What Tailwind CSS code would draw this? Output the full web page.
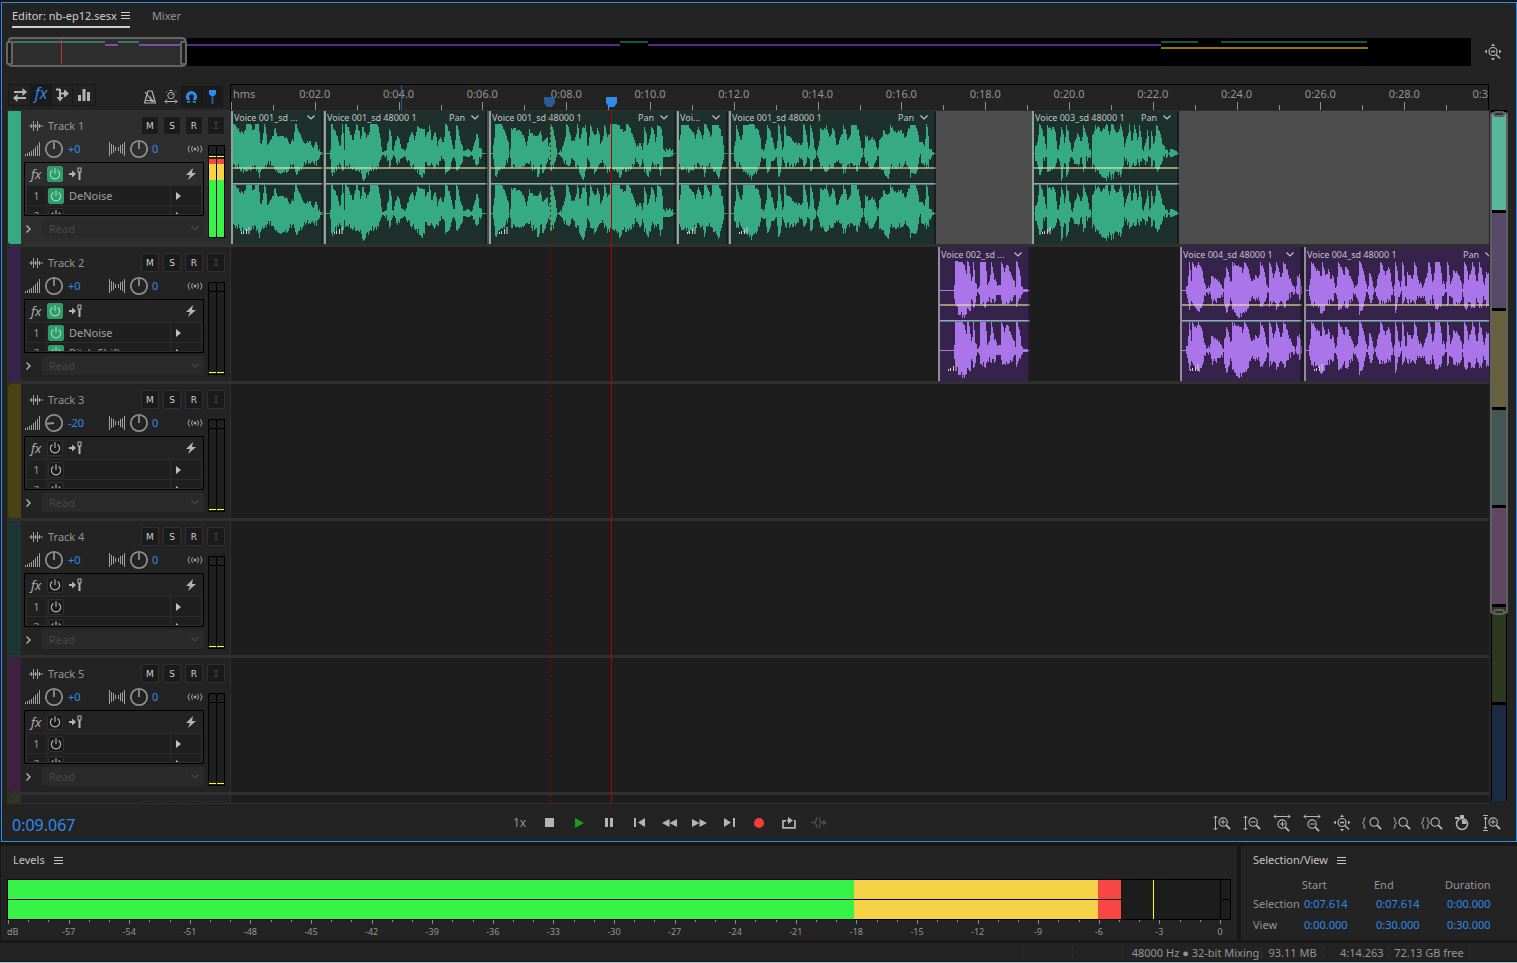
<!DOCTYPE html>
<html lang="en">
<head>
    <meta charset="UTF-8">
    <meta name="viewport" content="width=device-width, initial-scale=1.0">
    <title>Editor: nb-ep12.sesx</title>
    <script src="https://cdn.jsdelivr.net/npm/@tailwindcss/browser@4"></script>
</head>
<body class="flex h-screen flex-col overflow-hidden border-b border-[#b4c6c9] bg-[#171717] pt-[2px] font-['Noto_Sans','Open_Sans',sans-serif] text-[11px] leading-4 text-[#959595]">

    <!-- Icon sprite -->
    <svg class="hidden" aria-hidden="true">
        <symbol id="menu" viewBox="0 0 9 9"><path d="M0 1.5h9M0 4.5h9M0 7.5h9" stroke="currentColor" shape-rendering="crispEdges"/></symbol>
        <symbol id="power" viewBox="0 0 16 16"><path d="M5 3.900a5.300 5.300 0 1 0 6 0M8 1.500v6.500" fill="none" stroke="currentColor" stroke-width="1.300"/></symbol>
        <symbol id="wave" viewBox="0 0 14 10"><path d="M0 5h14M2.500 3v4M4.500 0v10M6.500 3v4M8.500 0v10M10.500 3v4" stroke="currentColor" fill="none"/></symbol>
        <symbol id="gain" viewBox="0 0 15 14"><path d="M.5 12v2M2.500 11v3M4.500 10v4M6.500 8.500v5.500M8.500 7v7M10.500 5v9M12.500 3v11M14.500 0v14" stroke="currentColor" shape-rendering="crispEdges"/></symbol>
        <symbol id="pan" viewBox="0 0 16 14"><path d="M.5 0v14M2.500 2v10M4.500 3v8M6.500 5v4M9.500 5v4M11.500 3v8M13.500 2v10M15.500 0v14" stroke="currentColor" shape-rendering="crispEdges"/></symbol>
        <symbol id="knob" viewBox="0 0 20 20"><circle cx="10" cy="10" r="8.200" fill="none" stroke="currentColor" stroke-width="1.800"/><path d="M10 10V3" stroke="currentColor" stroke-width="1.800"/></symbol>
        <symbol id="monitor" viewBox="0 0 16 8"><circle cx="8" cy="4" r="1.500" fill="currentColor"/><path d="M5.500 1.200q-2 2.800 0 5.600M10.500 1.200q2 2.800 0 5.600M2.500.5q-3 3.500 0 7M13.500.5q3 3.500 0 7" fill="none" stroke="currentColor"/></symbol>
        <symbol id="prefader" viewBox="0 0 13 14"><path d="M0 7h4" stroke="currentColor" stroke-width="2"/><path d="M3 3.500l4 3.500-4 3.500z" fill="currentColor"/><path d="M10.500 5v8" stroke="currentColor" stroke-width="2"/><rect x="9" y="1" width="3" height="4" fill="none" stroke="currentColor"/></symbol>
        <symbol id="bolt" viewBox="0 0 10 12"><path d="M7 0L0 7h4L2 12l8-7H6z" fill="currentColor"/></symbol>
        <symbol id="chevron" viewBox="0 0 8 5"><path d="M.5.5L4 4 7.500.5" fill="none" stroke="currentColor" stroke-width="1.200"/></symbol>
        <symbol id="lens" viewBox="0 0 14 14"><circle cx="5.500" cy="5.500" r="4.500" fill="none" stroke="currentColor" stroke-width="1.200"/><path d="M8.800 8.800L13 13" stroke="currentColor" stroke-width="2"/></symbol>
        <symbol id="zoom-full" viewBox="0 0 18 18"><circle cx="9" cy="8.500" r="4" fill="none" stroke="currentColor" stroke-width="1.200"/><path d="M7 8.500h4M12 11.500l4 4" stroke="currentColor" stroke-width="1.500"/><path d="M7 3l2-2.500L11 3zM7 15l2 2.500 2-2.500zM3 6.500L.5 8.500 3 10.500zM15 6.500l2.500 2-2.500 2z" fill="currentColor"/></symbol>
    </svg>

    <!-- Editor panel -->
    <main class="ml-px flex min-h-0 flex-1 flex-col border border-[#2d8ceb] bg-[#232323]">
        <nav class="flex h-[28px] items-start pl-[10px]">
            <a href="#editor" class="flex h-[25px] items-center gap-[4px] border-b-2 border-[#d0d0d0] pt-[2px] text-[#d0d0d0]">
                Editor: nb-ep12.sesx
                <svg class="size-[9px]"><use href="#menu"/></svg>
            </a>
            <a href="#mixer" class="ml-[22px] flex h-[24px] items-center pt-[2px]">Mixer</a>
        </nav>

        <!-- Session overview -->
        <div class="flex h-[42px] items-start pt-[7px] pl-[6px]">
            <div class="relative h-[28px] flex-1 bg-black">
                <svg class="h-full w-full" viewBox="0 0 1463 28" preserveAspectRatio="none" shape-rendering="crispEdges">
                    <rect width="179" height="28" fill="#2d2d2d"/>
                    <path d="M4 4h93M110 4h21" stroke="#3a7763" stroke-width="2"/>
                    <path d="M97 7h13M131 7h48" stroke="#794fa8" stroke-width="2"/>
                    <path d="M612 4h28M1153 4h37M1213 4h146" stroke="#145740" stroke-width="2"/>
                    <path d="M179 7h433M640 7h513" stroke="#572990" stroke-width="2"/>
                    <path d="M1153 10h207" stroke="#937800" stroke-width="2"/>
                    <path d="M53.500 1v25" stroke="#c9302c"/>
                </svg>
                <div class="absolute -top-px left-0 h-[30px] w-[12.2%] rounded-[4px] border-2 border-[#656565]">
                    <span class="absolute top-[2px] -left-[4px] h-[24px] w-[7px] rounded-[2px] border-2 border-[#656565] bg-[#1c1c1c]"></span>
                    <span class="absolute top-[2px] -right-[3px] h-[24px] w-[7px] rounded-[2px] border-2 border-[#656565] bg-[#1c1c1c]"></span>
                </div>
            </div>
            <button aria-label="Zoom out full" class="mt-[5px] mr-[14px] ml-[13px] text-[#b4b4b4]"><svg class="size-[18px]"><use href="#zoom-full"/></svg></button>
        </div>

        <!-- Tools and ruler -->
        <div class="mt-[11px] flex h-[26px] shrink-0 pl-[6px]">
            <div class="flex w-[222px] items-start text-[#b4b4b4]">
                <div class="flex h-[22px] divide-x divide-[#181818] rounded-[2px] border border-[#181818]">
                    <button aria-label="Inputs/Outputs" class="flex w-[22px] items-center justify-center"><svg class="h-[14px] w-[16px]" viewBox="0 0 16 14"><path d="M2 4h10M4 10h10" stroke="currentColor" stroke-width="2"/><path d="M10.500 0l4.500 4-4.500 4zM5.500 6L1 10l4.500 4z" fill="currentColor"/></svg></button>
                    <button aria-label="Effects" class="w-[21px] bg-[#1b1b1b] pb-[4px] font-['Open_Sans',sans-serif] text-[16px] leading-4 text-[#2d8ceb] italic">fx</button>
                    <button aria-label="Sends" class="flex w-[21px] items-center justify-center"><svg class="h-[14px] w-[14px]" viewBox="0 0 14 14"><path d="M5 1v9M1 1.500h4M5 5.500h5M10 2.500v6" stroke="currentColor" stroke-width="2" fill="none"/><path d="M1.500 9h7L5 13.500zM9.500 1.500L14 5.500l-4.500 4z" fill="currentColor"/></svg></button>
                    <button aria-label="EQ" class="flex w-[22px] items-center justify-center"><svg class="h-[12px] w-[12px]" viewBox="0 0 12 12"><path d="M0 6h3v6H0zM4.500 0h3v12h-3zM9 3h3v9H9z" fill="currentColor"/></svg></button>
                </div>
                <div class="mt-[2px] ml-auto flex h-[21px] items-center">
                    <button aria-label="Metronome" class="w-[21px]"><svg class="mx-auto h-[14px] w-[14px]" viewBox="0 0 14 14"><path d="M5 1h4l3.500 12h-11zM3 10.500h8M2 2l8 10" fill="none" stroke="currentColor" stroke-width="1.200"/><path d="M7 5l4 7H7z" fill="currentColor" fill-opacity=".6"/></svg></button>
                    <button aria-label="Time stretch" class="w-[21px]"><svg class="mx-auto h-[14px] w-[14px]" viewBox="0 0 14 14"><circle cx="7" cy="5.500" r="3.200" fill="none" stroke="currentColor"/><path d="M7 5.500l2-2M5.500.5h3M3 1.500l-1 1M11 1.500l1 1M1 11.500h12M3 9.500l-2 2 2 2M11 9.500l2 2-2 2" fill="none" stroke="currentColor"/></svg></button>
                    <button aria-label="Snap" class="h-full w-[21px] border border-[#181818] bg-[#1b1b1b] text-[#2d8ceb]"><svg class="mx-auto h-[13px] w-[13px]" viewBox="0 0 13 13"><path d="M4 12.500l-1-4a4 4 0 1 1 7 0l-1 4" fill="none" stroke="currentColor" stroke-width="3.200"/><path d="M1 10.500h5M7 10.500h5" stroke="#1b1b1b"/></svg></button>
                    <button aria-label="Markers" class="mr-[7px] h-full w-[21px] border border-[#181818] bg-[#1b1b1b] text-[#2d8ceb]"><svg class="mx-auto h-[14px] w-[9px]" viewBox="0 0 9 14"><path d="M1 0h7v4L6 6H3L1 4z" fill="currentColor"/><path d="M4.500 6v8" stroke="#285d94" stroke-width="2"/></svg></button>
                </div>
            </div>
            <div class="relative mr-[27px] flex-1 overflow-hidden border-x border-t border-black">
                <span class="absolute top-[1px] left-[2px]">hms</span>
                <div id="ruler"></div>
                <span class="absolute top-0 left-[13.5%] h-full w-px bg-[#285d94]"></span>
                <svg class="absolute top-[12px] left-[25.4%] -ml-[6px] h-[11px] w-[11px]" viewBox="0 0 11 11"><path d="M0 0h11v6L8 10H3L0 6z" fill="#285d94"/></svg>
                <svg class="absolute top-[12px] left-[30.2%] -ml-[5px] h-[11px] w-[11px]" viewBox="0 0 11 11"><path d="M0 0h11v6L8 10H3L0 6z" fill="#2d8ceb"/></svg>
            </div>
        </div>

        <!-- Tracks -->
        <div class="ml-[5px] flex min-h-0 flex-1">
            <div class="flex min-w-0 flex-1 overflow-hidden border-y border-l border-[#303030]">
                <div id="headers" class="-mt-px w-[223px] shrink-0 border-r border-[#303030]"></div>
                <div class="relative -mt-px min-w-0 flex-1">
                    <div id="lanes"></div>
                    <span class="absolute top-0 left-[25.36%] h-full w-px bg-[repeating-linear-gradient(#a80000_0_2px,transparent_2px_5px)]"></span>
                    <span class="absolute top-0 left-[30.2%] h-full w-px bg-[#b40000]"></span>
                </div>
            </div>
            <div class="relative mr-[8px] w-[19px] shrink-0 pb-[3px]">
                <div class="ml-[2px] flex h-full w-[16px] flex-col gap-[3px] border-x border-black bg-black pt-[4px]">
                    <span class="flex-1 bg-[#56b898]"></span>
                    <span class="flex-1 bg-[#594968]"></span>
                    <span class="flex-1 bg-[#68613f]"></span>
                    <span class="flex-1 bg-[#425654]"></span>
                    <span class="flex-1 bg-[#5f4762]"></span>
                    <span class="flex-1 bg-[#2b381e]"></span>
                    <span class="flex-1 bg-[#192a41]"></span>
                </div>
                <div class="absolute top-[2px] left-px h-[72.4%] w-[18px] rounded-[3px] border-2 border-[#606060]">
                    <span class="absolute -top-[3px] left-[1px] h-[6px] w-[12px] rounded-[3px] border-2 border-[#606060] bg-[#303030]"></span>
                    <span class="absolute -bottom-[3px] left-[1px] h-[6px] w-[12px] rounded-[3px] border-2 border-[#606060] bg-[#303030]"></span>
                </div>
            </div>
        </div>

        <!-- Transport -->
        <div class="grid h-[37px] shrink-0 grid-cols-[505px_1fr_auto] items-center text-[#b4b4b4]">
            <output class="pt-[4px] pl-[10px] text-[16px] text-[#2d8ceb]">0:09.067</output>
            <div class="flex items-center">
                <span class="w-[27px] pl-[6px] text-[12px] text-[#959595]">1x</span>
                <button aria-label="Stop" class="flex w-[30px] justify-center"><svg class="size-[9px]" viewBox="0 0 9 9"><path d="M0 0h9v9H0z" fill="currentColor"/></svg></button>
                <button aria-label="Play" class="flex w-[30px] justify-center"><svg class="h-[10px] w-[9px]" viewBox="0 0 9 10"><path d="M0 0l9 5-9 5z" fill="#17a017"/></svg></button>
                <button aria-label="Pause" class="flex w-[30px] justify-center"><svg class="h-[9px] w-[8px]" viewBox="0 0 8 9"><path d="M0 0h3v9H0zM5 0h3v9H5z" fill="currentColor"/></svg></button>
                <button aria-label="Previous" class="flex w-[30px] justify-center"><svg class="h-[9px] w-[11px]" viewBox="0 0 11 9"><path d="M0 0h2v9H0zM11 0v9L4 4.500z" fill="currentColor"/></svg></button>
                <button aria-label="Rewind" class="flex w-[30px] justify-center"><svg class="h-[8px] w-[15px]" viewBox="0 0 15 8"><path d="M7.500 0v8L0 4zM15 0v8L7.500 4z" fill="currentColor"/></svg></button>
                <button aria-label="Fast forward" class="flex w-[30px] justify-center"><svg class="h-[8px] w-[15px]" viewBox="0 0 15 8"><path d="M0 0v8l7.500-4zM7.500 0v8L15 4z" fill="currentColor"/></svg></button>
                <button aria-label="Next" class="flex w-[30px] justify-center"><svg class="h-[9px] w-[11px]" viewBox="0 0 11 9"><path d="M9 0h2v9H9zM0 0v9l7-4.500z" fill="currentColor"/></svg></button>
                <button aria-label="Record" class="flex w-[30px] justify-center"><svg class="size-[10px]" viewBox="0 0 10 10"><circle cx="5" cy="5" r="5" fill="#f83c3c"/></svg></button>
                <button aria-label="Loop" class="flex w-[30px] justify-center"><svg class="h-[12px] w-[14px]" viewBox="0 0 14 12"><path d="M4 3.800H1v7h12v-7h-1M5 3.500h3" fill="none" stroke="currentColor" stroke-width="1.700"/><path d="M6 0l5 3.500L6 7z" fill="currentColor"/></svg></button>
                <button aria-label="Skip selection" class="flex w-[30px] justify-center text-[#4a4a4a]"><svg class="h-[11px] w-[16px]" viewBox="0 0 16 11"><path d="M0 5.500h3M5.500 0v3l-2 2.500 2 2.500v3M8.500 0v3l2 2.500-2 2.500v3M9 5.500h4" fill="none" stroke="currentColor" stroke-width="1.400"/><path d="M12 2.500l4 3-4 3z" fill="currentColor"/></svg></button>
            </div>
            <div class="mr-[9px] flex items-center">
                <button aria-label="Zoom in vertically" class="flex w-[30px] justify-center"><svg class="h-[16px] w-[18px]" viewBox="0 0 18 16"><path d="M2.500 1v14M.5 3l2-2 2 2M.5 13l2 2 2-2M7.500 7h5M10 4.500v5" fill="none" stroke="currentColor"/><use href="#lens" x="5" y="2" width="13" height="13"/></svg></button>
                <button aria-label="Zoom out vertically" class="flex w-[30px] justify-center"><svg class="h-[16px] w-[18px]" viewBox="0 0 18 16"><path d="M2.500 1v14M.5 3l2-2 2 2M.5 13l2 2 2-2M7.500 7h5" fill="none" stroke="currentColor"/><use href="#lens" x="5" y="2" width="13" height="13"/></svg></button>
                <button aria-label="Zoom in horizontally" class="flex w-[30px] justify-center"><svg class="h-[18px] w-[18px]" viewBox="0 0 18 18"><path d="M1 2.500h16M3 .5l-2 2 2 2M15 .5l2 2-2 2M7 10h5M9.500 7.500v5" fill="none" stroke="currentColor"/><use href="#lens" x="4" y="5" width="13" height="13"/></svg></button>
                <button aria-label="Zoom out horizontally" class="flex w-[30px] justify-center"><svg class="h-[18px] w-[18px]" viewBox="0 0 18 18"><path d="M1 2.500h16M3 .5l-2 2 2 2M15 .5l2 2-2 2M7 10h5" fill="none" stroke="currentColor"/><use href="#lens" x="4" y="5" width="13" height="13"/></svg></button>
                <button aria-label="Zoom full" class="flex w-[30px] justify-center"><svg class="size-[18px]"><use href="#zoom-full"/></svg></button>
                <button aria-label="Zoom to in point" class="flex w-[30px] justify-center pt-px"><svg class="h-[14px] w-[20px]" viewBox="0 0 20 14"><path d="M3.500 1.500q-1.500 0-1.500 2v2L.5 7 2 8.500v2q0 2 1.500 2" fill="none" stroke="currentColor"/><use href="#lens" x="7" y="1" width="13" height="13"/></svg></button>
                <button aria-label="Zoom to out point" class="flex w-[30px] justify-center pt-px"><svg class="h-[14px] w-[18px]" viewBox="0 0 18 14"><path d="M.5 1.500q1.500 0 1.500 2v2L3.500 7 2 8.500v2q0 2-1.500 2" fill="none" stroke="currentColor"/><use href="#lens" x="5" y="1" width="13" height="13"/></svg></button>
                <button aria-label="Zoom to selection" class="flex w-[30px] justify-center pt-px"><svg class="h-[14px] w-[22px]" viewBox="0 0 22 14"><path d="M3.500 1.500q-1.500 0-1.500 2v2L.5 7 2 8.500v2q0 2 1.500 2M5.500 1.500q1.500 0 1.500 2v2L8.500 7 7 8.500v2q0 2-1.500 2" fill="none" stroke="currentColor"/><use href="#lens" x="9" y="1" width="13" height="13"/></svg></button>
                <button aria-label="Timed record" class="flex w-[30px] justify-center"><svg class="h-[16px] w-[14px]" viewBox="0 0 14 16"><circle cx="7" cy="9" r="5.500" fill="none" stroke="currentColor" stroke-width="1.500"/><path d="M5 0h4v3H5zM0 2h4v2H0zM7 4.500A4.500 4.500 0 0 1 11.500 9L7 9z" fill="currentColor"/></svg></button>
                <button aria-label="Zoom selected track" class="flex w-[30px] justify-center"><svg class="h-[16px] w-[18px]" viewBox="0 0 18 16"><path d="M0 .5h5M0 15.500h5M2.500 2v12M1 4l1.500-2L4 4M1 12l1.500 2L4 12M7.500 7h5M10 4.500v5" fill="none" stroke="currentColor"/><use href="#lens" x="5" y="2" width="13" height="13"/></svg></button>
            </div>
        </div>
    </main>

    <!-- Bottom panels -->
    <div class="mt-[4px] flex h-[94px] shrink-0 gap-[4px]">
        <section class="ml-px min-w-0 flex-1 bg-[#232323] px-[6px] pt-[6px]">
            <h2 class="flex items-center gap-[9px] pl-[6px] text-[#c4c4c4]">Levels <svg class="size-[9px]"><use href="#menu"/></svg></h2>
            <div class="mt-[11px] flex h-[41px] border border-black bg-[#1c1c1c]">
                <div class="relative flex-1">
                    <div class="flex h-full">
                        <span class="w-[69.8%] bg-[#37f247]"></span>
                        <span class="w-[20.1%] bg-[#f6d247]"></span>
                        <span class="w-[1.9%] bg-[#f74644]"></span>
                    </div>
                    <span class="absolute top-0 left-[94.5%] h-full w-px bg-[#ffff00]"></span>
                    <span class="absolute top-[19px] left-0 h-px w-[91.8%] bg-black"></span>
                </div>
                <div class="flex w-[10px] flex-col border-l border-black"><span class="h-[20px] border-b border-black"></span></div>
            </div>
            <div id="scale" class="relative mr-[11px] ml-px text-[9px]"></div>
        </section>

        <section class="w-[276px] bg-[#232323] pt-[6px] pl-[12px]">
            <h2 class="flex items-center gap-[9px] text-[#c4c4c4]">Selection/View <svg class="size-[9px]"><use href="#menu"/></svg></h2>
            <table class="mt-[7px] w-[249px] table-fixed text-left">
                <thead>
                    <tr class="h-[20px]"><td class="w-[49px]"></td><th scope="col" class="w-[72px] font-normal">Start</th><th scope="col" class="w-[71px] font-normal">End</th><th scope="col" class="font-normal">Duration</th></tr>
                </thead>
                <tbody class="text-[#2d8ceb]">
                    <tr class="h-[18px]"><th scope="row" class="font-normal text-[#959595]">Selection</th><td class="pl-[2px]">0:07.614</td><td class="pl-[2px]">0:07.614</td><td class="pl-[2px]">0:00.000</td></tr>
                    <tr class="h-[23px]"><th scope="row" class="font-normal text-[#959595]">View</th><td class="pl-[2px]">0:00.000</td><td class="pl-[2px]">0:30.000</td><td class="pl-[2px]">0:30.000</td></tr>
                </tbody>
            </table>
        </section>
    </div>

    <footer class="mt-[3px] mb-px flex h-[18px] shrink-0 items-center justify-end bg-[#232323] pr-[47px] *:h-[12px] *:border-l *:border-[#303030] *:leading-[14px] *:whitespace-nowrap">
        <span class="w-[50px]"></span>
        <span class="w-[50px]"></span>
        <span class="w-[139px] pl-[7px] text-center">48000 Hz ● 32-bit Mixing</span>
        <span class="w-[62px] text-center">93.11 MB</span>
        <span class="w-[65px] pl-[16px]">4:14.263</span>
        <span class="w-[81px] text-center">72.13 GB free</span>
        <span></span>
    </footer>

    <script>
        const VIEW = 1258; // timeline units shown in the lanes, 30 seconds

        const tracks = [
            { name: 'Track 1', strip: 'bg-[#36aa83]', vol: '+0', fx: ['DeNoise', ''], live: true },
            { name: 'Track 2', strip: 'bg-[#35234b]', vol: '+0', fx: ['DeNoise', 'Pitch Shifter'] },
            { name: 'Track 3', strip: 'bg-[#494213]', vol: '-20', fx: ['', ''] },
            { name: 'Track 4', strip: 'bg-[#1b3634]', vol: '+0', fx: ['', ''] },
            { name: 'Track 5', strip: 'bg-[#3f203f]', vol: '+0', fx: ['', ''] },
            { name: '', strip: 'bg-[#2b381e]', partial: true },
        ];

        // env: "x up down" breakpoints of the peak envelope
        const clips = [
            { lane: 0, x: 0, w: 92, name: 'Voice 001_sd ...', env: '2 29 14,9 22 18,13 22 19,15 29 18,19 29 18,21 25 16,24 29 17,27 29 25,29 12 20,33 29 14,36 12 12,41 17 13,43 27 17,46 18 20,54 17 19,58 12 15,61 14 14,64 29 22,68 22 18,71 15 14,74 12 11,78 13 11,81 8 11,84 15 13,87 5 7,89 1 1' },
            { lane: 0, x: 93, w: 163, name: 'Voice 001_sd 48000 1', pan: 1, env: '6 5 5,7 29 22,15 10 10,18 29 18,20 7 12,21 29 14,28 16 17,32 29 17,36 17 18,38 27 27,42 18 22,46 29 18,52 29 16,58 1 1,63 10 10,65 27 14,68 5 5,71 13 9,73 20 11,77 5 4,80 2 2,83 13 10,87 24 14,90 16 15,93 27 20,98 27 25,101 20 14,105 28 12,107 15 12,110 23 15,113 10 15,115 18 8,118 12 6,121 29 20,129 4 3,132 28 17,136 14 15,139 2 2,143 4 3,147 1 1,149 9 6,152 22 16,155 7 6,158 0 0' },
            { lane: 0, x: 258, w: 187, name: 'Voice 001_sd 48000 1', pan: 1, env: '4 10 10,6 29 23,11 29 16,18 15 10,20 0 0,22 27 14,28 25 15,37 10 10,40 25 10,42 21 18,47 18 14,48 20 27,51 22 12,53 13 20,57 19 10,59 8 6,61 29 18,68 0 0,75 15 10,77 29 14,82 13 10,86 18 14,88 29 14,90 15 20,93 27 27,96 28 18,98 8 5,101 28 14,105 18 20,108 27 14,111 10 10,115 28 14,118 18 20,121 29 16,130 28 24,134 22 18,137 29 18,147 8 8,150 13 14,153 6 8,155 27 18,158 12 24,162 27 14,166 15 14,168 28 14,171 27 24,174 4 3,179 6 3,183 4 2,184 0 0' },
            { lane: 0, x: 446, w: 51, name: 'Voi...', env: '2 15 14,4 28 16,11 28 20,18 18 14,20 27 14,25 15 14,27 29 24,29 28 14,33 18 14,35 28 18,41 28 25,44 20 15,46 10 8,47 0 0' },
            { lane: 0, x: 498, w: 207, name: 'Voice 001_sd 48000 1', pan: 1, env: '5 10 8,7 28 14,11 15 14,14 28 20,22 29 26,29 24 15,32 4 3,35 8 8,38 28 20,42 17 8,46 3 4,49 29 24,53 3 3,55 28 14,57 20 14,62 15 14,67 12 11,72 8 4,74 29 14,79 4 4,81 28 18,85 6 5,87 0 0,89 10 8,91 25 14,97 28 20,100 17 14,103 27 14,107 10 10,111 18 10,114 28 20,118 15 15,122 28 10,127 28 20,132 8 4,134 0 0,136 20 10,139 16 15,144 16 15,148 3 2,150 15 15,154 24 20,158 20 27,161 28 14,166 23 15,171 24 14,175 18 10,179 27 14,181 28 24,186 28 20,190 12 3,192 13 10,195 10 14,197 29 18,200 6 7,203 1 1,205 0 0' },
            { lane: 0, x: 801, w: 147, name: 'Voice 003_sd 48000 1', pan: 1, env: '3 8 8,7 29 25,11 20 8,14 4 3,15 28 18,22 25 14,25 5 4,29 27 27,32 12 10,34 28 27,37 15 8,39 3 3,42 14 10,45 23 14,48 12 6,51 28 18,54 20 8,57 5 5,59 0 0,60 20 14,63 28 18,69 25 24,74 29 27,77 20 20,79 29 26,84 23 20,88 29 24,92 8 6,93 14 10,97 29 16,99 15 14,102 28 14,105 15 10,107 28 14,110 4 4,113 14 12,115 23 8,117 3 3,119 24 14,121 12 10,124 28 20,128 20 12,130 10 8,134 4 4,136 0 0,138 4 3,143 2 1,146 0 0' },
            { lane: 1, x: 707, w: 92, name: 'Voice 002_sd ...', env: '16 6 8,17 29 14,20 28 24,24 28 28,28 20 24,29 29 18,32 20 24,33 10 10,35 28 18,37 10 12,39 1 1,41 4 4,42 28 14,47 28 18,49 8 12,51 12 12,53 28 12,56 12 12,59 8 4,62 5 4,63 28 14,66 20 14,68 27 14,71 21 12,75 12 10,77 5 8,78 29 17,81 20 12,83 4 4,85 1 1,91 0 0' },
            { lane: 1, x: 949, w: 122, name: 'Voice 004_sd 48000 1', env: '6 5 5,9 28 22,11 10 14,12 28 14,15 24 18,18 28 22,24 10 8,26 1 1,28 4 4,31 17 14,36 12 12,40 8 10,43 1 1,44 14 15,46 24 22,50 8 8,52 28 22,57 27 27,60 25 28,62 20 22,64 28 22,71 10 8,75 16 10,78 13 8,80 28 18,86 8 8,88 2 2,89 28 16,93 15 10,96 28 20,100 14 10,103 28 18,109 14 8,113 4 4,115 0 0,117 14 8,119 17 10,121 4 3' },
            { lane: 1, x: 1073, w: 197, name: 'Voice 004_sd 48000 1', pan: 1, env: '5 6 8,7 28 16,12 22 17,17 16 25,18 28 26,21 16 14,24 22 14,26 12 14,28 18 12,31 2 2,34 28 20,39 16 14,41 26 20,45 16 14,50 6 4,52 4 6,55 29 24,61 10 6,63 1 1,65 18 14,70 0 0,73 14 12,76 28 14,81 18 12,84 24 16,87 8 6,89 0 0,91 28 22,94 12 8,96 3 3,98 28 14,101 5 6,103 18 14,108 14 10,110 28 14,114 10 8,118 5 6,121 12 14,124 28 16,128 12 10,131 28 20,135 28 18,138 10 8,141 1 1,143 28 15,146 8 6,149 20 16,156 14 12,158 1 1,160 28 22,164 14 14,168 28 20,172 10 10,175 28 20,179 8 8,182 20 16,190 14 14' },
        ];

        const icon = (id, cls) => `<svg class="${cls}"><use href="#${id}"/></svg>`;

        const power = on => `<button aria-label="Power" class="flex size-[16px] items-center justify-center rounded-[2px] border ${on ? 'border-[#2f9c6b] bg-[#2f9c6b] text-[#9bdcbc]' : 'border-[#303030] bg-[#1b1b1b] text-[#b4b4b4]'}">${icon('power', 'size-[14px] shrink-0')}</button>`;

        const slot = (name, i) => `
            <div class="flex h-[20px] items-center border-b border-[#2c2c2c]">
                <span class="w-[19px] text-center">${i + 1}</span>
                <span class="flex h-full w-[23px] items-center border-l border-[#2c2c2c] pl-px">${power(name)}</span>
                <span class="w-[101px] text-[#a0a0a0]">${name}</span>
                <button aria-label="Effect menu" class="flex h-full flex-1 items-center border-l border-[#2c2c2c] pl-[5px] text-[#c0c0c0]"><svg class="h-[8px] w-[5px]" viewBox="0 0 5 8"><path d="M0 0l5 4-5 4z" fill="currentColor"/></svg></button>
            </div>`;

        const controls = t => `
            <div class="flex gap-[4px]">
                <div class="w-[180px]">
                    <div class="flex h-[27px] items-center pt-px text-[#a0a0a0]">
                        ${icon('gain', 'ml-px h-[14px] w-[15px]')}
                        <svg class="ml-[4px] size-[20px] text-[#8f8f8f] ${t.vol === '-20' ? '-rotate-96' : ''}"><use href="#knob"/></svg>
                        <span class="ml-[4px] w-[41px] text-[#2d8ceb]">${t.vol}</span>
                        ${icon('pan', 'h-[14px] w-[16px]')}
                        ${icon('knob', 'ml-[4px] size-[20px] text-[#8f8f8f]')}
                        <span class="ml-[3px] text-[#2d8ceb]">0</span>
                        ${icon('monitor', 'mr-px ml-auto h-[8px] w-[16px]')}
                    </div>
                    <div class="h-[54px] overflow-hidden border border-black">
                        <div class="flex h-[22px] items-center pr-[7px] pl-[6px] text-[#b4b4b4]">
                            <span class="w-[16px] font-['Open_Sans',sans-serif] text-[13px] italic">fx</span>
                            ${power(t.fx[0])}
                            ${icon('prefader', 'ml-[6px] h-[14px] w-[13px]')}
                            ${icon('bolt', 'ml-auto h-[12px] w-[10px]')}
                        </div>
                        <div class="mx-px h-[30px] overflow-hidden rounded-[2px] border border-[#2c2c2c] bg-[#1f1f1f]">${t.fx.map(slot).join('')}</div>
                    </div>
                    <div class="mt-[3px] flex h-[19px] items-center">
                        <button aria-label="Show automation" class="w-[18px] pl-[2px] text-[#b4b4b4]"><svg class="h-[8px] w-[5px]" viewBox="0 0 5 8"><path d="M.5.5L4 4 .5 7.500" fill="none" stroke="currentColor" stroke-width="1.400"/></svg></button>
                        <div class="relative flex-1 text-[#484848]">
                            <select aria-label="${t.name} automation" class="h-[19px] w-full appearance-none rounded-[2px] bg-[#2a2a2a] pl-[7px]"><option>Read</option></select>
                            ${icon('chevron', 'pointer-events-none absolute top-[7px] right-[5px] h-[5px] w-[8px]')}
                        </div>
                    </div>
                </div>
                <div class="mt-[10px] grid h-[93px] w-[17px] grid-cols-2 gap-px border border-black bg-black">
                    ${meter(t)}${meter(t)}
                </div>
            </div>`;

        const header = t => `
            <div class="flex h-[137px] border-b-[3px] border-[#303030] ${t.live ? 'bg-[#2e2e2e]' : 'bg-[#232323]'}">
                <div class="w-[13px] rounded-l-[3px] ${t.strip}"></div>
                <div class="flex-1 pl-[3px]">
                    <div class="flex h-[25px] items-end">
                        ${icon('wave', 'mb-[4px] ml-[5px] h-[10px] w-[14px] text-[#a0a0a0]')}
                        <span class="mb-px ml-[5px] flex-1">${t.name}</span>
                        <div class="mr-[5px] flex gap-[4px] font-['DejaVu_Sans',sans-serif] text-[9px] text-[#d0d0d0] *:h-[19px] *:w-[18px] *:rounded-[2px] *:border *:border-[#303030] *:bg-[#1b1b1b] *:pt-px">
                            <button aria-label="Mute">${t.partial ? '' : 'M'}</button>
                            <button aria-label="Solo">${t.partial ? '' : 'S'}</button>
                            <button aria-label="Arm for record">${t.partial ? '' : 'R'}</button>
                            <button aria-label="Monitor input" class="font-['DejaVu_Sans_Mono',monospace] text-[#484848]">${t.partial ? '' : 'I'}</button>
                        </div>
                    </div>
                    ${t.partial ? '' : controls(t)}
                </div>
            </div>`;

        function meter(t) {
            if (t.live) {
                return `<div class="flex flex-col bg-[#1f1f1f]">
                    <span class="h-[9px] border-b border-black"></span><span class="mt-px mb-[2px] h-px bg-[#ffff00]"></span>
                    <span class="h-[5px] bg-[#f74644]"></span><span class="h-[16px] bg-[#f6d247]"></span><span class="flex-1 bg-[#37f247]"></span></div>`;
            }
            return `<div class="flex flex-col justify-between bg-[#1f1f1f]"><span class="h-[9px] border-b border-black"></span><span class="mb-px h-px bg-[#ffff00]"></span></div>`;
        }

        // One column per unit, holding near each breakpoint and bending late towards the next
        function waveform(c, mid) {
            const pts = c.env.split(',').map(p => p.split(' ').map(Number));
            let path = '', k = 0;
            for (let x = 0; x < c.w; x++) {
                while (k + 1 < pts.length && pts[k + 1][0] <= x) k++;
                const [ax, au, ad] = pts[k];
                const [bx, bu, bd] = pts[k + 1] || [c.w, 0, 0];
                const t = x < ax ? 0 : ((x - ax) / (bx - ax)) ** 2;
                let u = x < ax ? 0 : au + (bu - au) * t;
                let d = x < ax ? 0 : ad + (bd - ad) * t;
                const j = Math.abs(Math.sin((x + c.x) * 12.9898) * 43758.5453) % 1;
                const n = Math.abs(Math.sin((x + c.x) * 78.233) * 12543.123) % 1;
                if (u > 4 && u < 28) u -= j * 4;
                if (d > 4) d -= n * n * 6;
                u = Math.round(u);
                d = Math.round(d);
                path += `M${x} ${mid - u}h1v${u + d + 1}h-1z`;
            }
            return path;
        }

        const clip = c => `
            <article class="absolute inset-y-0 overflow-hidden ${c.lane ? 'bg-[#35234b]' : 'bg-[#1d302b]'}" style="left:${c.x / VIEW * 100}%;width:${c.w / VIEW * 100}%">
                <svg class="absolute inset-0 h-full w-full" viewBox="0 0 ${c.w} 134" preserveAspectRatio="none" shape-rendering="crispEdges">
                    <path d="${waveform(c, 43)}${waveform(c, 103)}" fill="${c.lane ? '#ab75ea' : '#36aa83'}"/>
                    <path d="M0 58h${c.w}" stroke="#e6e29a" stroke-opacity=".6" stroke-width="2"/>
                    <path d="M0 73.500h${c.w}" stroke="#8fa9b5" stroke-width="1"/>
                    <path d="M0 74.500h${c.w}" stroke="#5d7c8a" stroke-width="1"/>
                    <path d="M${c.w - 2} 0h2v134h-2z" fill="#000" fill-opacity=".3"/>
                </svg>
                <div class="relative flex h-full items-start border-l-2 pr-[8px] pl-px text-[9px] whitespace-nowrap text-[#c4c4c4] ${c.lane ? 'border-[#9389a0]' : 'border-[#8fa39b]'}">
                    <span class="flex-1">${c.name}</span>
                    ${c.pan ? '<span class="mr-[6px]">Pan</span>' : ''}
                    ${icon('chevron', 'mt-[5px] h-[5px] w-[8px]')}
                </div>
                <svg class="absolute bottom-[10px] left-[10px] h-[7px] w-[9px]" viewBox="0 0 9 7"><path d="M.5 5v2M2.500 4v3M5.500 2v5M8 0v7" stroke="#d0d0d0"/></svg>
            </article>`;

        document.getElementById('headers').innerHTML = tracks.map(header).join('');

        document.getElementById('lanes').innerHTML = tracks.map((t, i) => `
            <div class="h-[137px] border-b-[3px] border-[#303030] ${t.live ? 'bg-[#4d4d4d]' : 'bg-[#1d1d1d]'}">
                <div class="relative h-full overflow-hidden">${clips.filter(c => c.lane === i).map(clip).join('')}</div>
            </div>`).join('');

        let marks = '';
        for (let s = 0; s <= 30; s++) {
            const left = s / 30 * 100;
            marks += `<span class="absolute bottom-0 w-px bg-[#8f8f8f] ${s % 2 ? 'h-[5px]' : 'h-[8px]'}" style="left:${left}%"></span>`;
            if (s && s % 2 === 0) marks += `<span class="absolute top-[1px] -translate-x-1/2" style="left:${left}%">0:${String(s).padStart(2, '0')}.0</span>`;
        }
        document.getElementById('ruler').innerHTML = marks;

        let scale = '';
        for (let db = -60; db <= 0; db++) {
            const left = (db + 60) / 60 * 100;
            scale += `<span class="absolute top-0 w-px bg-[#8f8f8f] ${db % 3 ? 'h-[2px]' : 'h-[4px]'}" style="left:${left}%"></span>`;
            if (db % 3 === 0) scale += `<span class="absolute top-[4px] ${db === -60 ? '-ml-px' : '-translate-x-1/2'}" style="left:${left}%">${db === -60 ? 'dB' : db}</span>`;
        }
        document.getElementById('scale').innerHTML = scale;
    </script>
</body>
</html>
